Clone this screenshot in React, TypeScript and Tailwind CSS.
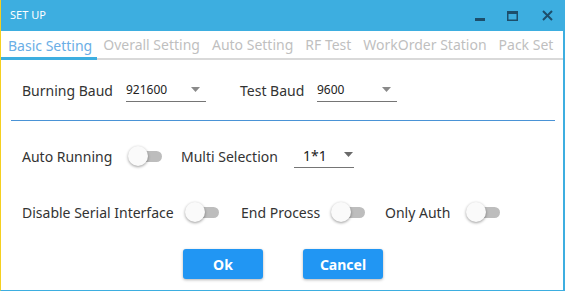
import React from "react";

const font = { fontFamily: '"Noto Sans", "Open Sans", sans-serif' };

function Select({ value, width }: { value: string; width: string }) {
  return (
    <div className={`relative flex items-center h-[24px] border-b border-[#757575] ${width}`}>
      <span className="text-[12px] text-[#222]">{value}</span>
      <svg className="absolute right-[6px] top-[9px]" width="9" height="5" viewBox="0 0 9 5">
        <path d="M0 0 L9 0 L4.5 5 Z" fill="#8a8a8a" />
      </svg>
    </div>
  );
}

function Toggle() {
  return (
    <div className="relative w-[34px] h-[20px] flex items-center">
      <div className="ml-[10px] w-[24px] h-[11px] rounded-full bg-[#bdbdbd]" />
      <div className="absolute left-0 top-0 w-[20px] h-[20px] rounded-full bg-[#fafafa] shadow-[0_1px_3px_rgba(0,0,0,0.4)]" />
    </div>
  );
}

export default function App() {
  return (
    <div className="w-[565px] h-[292px] bg-white text-[#333] overflow-hidden" style={font}>
      <div className="w-[565px] h-[291px] border-l border-l-[#f5d020] border-r-2 border-r-[#3daee0] border-b border-b-[#3daee0] flex flex-col">
        <div className="h-[31px] bg-[#3daee0] flex items-center pl-[9px] shrink-0">
          <span className="text-white text-[11px]">SET UP</span>
          <div className="ml-auto flex items-center h-full">
            <svg className="mr-[22px]" width="10" height="10" viewBox="0 0 10 10">
              <rect x="0" y="7" width="10" height="3" fill="#1d4e6b" />
            </svg>
            <svg className="mr-[24px]" width="11" height="10" viewBox="0 0 11 10">
              <rect x="0.75" y="0.75" width="9.5" height="8.5" fill="none" stroke="#1d4e6b" strokeWidth="1.5" />
              <rect x="0" y="0" width="11" height="3" fill="#1d4e6b" />
            </svg>
            <svg className="mr-[10px]" width="11" height="11" viewBox="0 0 11 11">
              <path d="M1 1 L10 10 M10 1 L1 10" stroke="#1d4e6b" strokeWidth="2" />
            </svg>
          </div>
        </div>
        <div className="h-[29px] flex items-end border-b-2 border-[#d9d9d9] shrink-0 whitespace-nowrap">
          <div className="pl-[7px] pr-[5px] h-full flex items-center text-[14px] text-[#6aaee6] border-b-[3px] border-[#3daee0] -mb-[2px]">Basic Setting</div>
          <div className="pl-[6px] pr-[6px] h-full flex items-center text-[14px] text-[#bfbfbf]">Overall Setting</div>
          <div className="px-[6px] h-full flex items-center text-[14px] text-[#bfbfbf]">Auto Setting</div>
          <div className="px-[6px] h-full flex items-center text-[14px] text-[#bfbfbf]">RF Test</div>
          <div className="px-[6px] h-full flex items-center text-[14px] text-[#bfbfbf]">WorkOrder Station</div>
          <div className="px-[6px] h-full flex items-center text-[14px] text-[#bfbfbf]">Pack Set</div>
        </div>
        <div className="flex flex-col pl-[21px] text-[14px]">
          <div className="flex items-center h-[24px] mt-[18px]">
            <span className="w-[104px]">Burning Baud</span>
            <Select value="921600" width="w-[80px]" />
            <span className="ml-[34px] w-[77px]">Test Baud</span>
            <Select value="9600" width="w-[80px]" />
          </div>
          <div className="h-[1px] bg-[#4a93d6] mt-[18px] mr-[8px] -ml-[11px]" />
          <div className="flex items-center h-[24px] mt-[23px]">
            <span className="w-[106px]">Auto Running</span>
            <Toggle />
            <span className="ml-[19px] w-[113px]">Multi Selection</span>
            <div className="relative flex items-center h-[24px] border-b border-[#757575] w-[60px]">
              <span className="text-[14px] text-[#222] pl-[9px]">1*1</span>
              <svg className="absolute right-[1px] top-[8px]" width="9" height="5" viewBox="0 0 9 5">
                <path d="M0 0 L9 0 L4.5 5 Z" fill="#6a6a6a" />
              </svg>
            </div>
          </div>
          <div className="flex items-center h-[24px] mt-[32px]">
            <span className="w-[163px]">Disable Serial Interface</span>
            <Toggle />
            <span className="ml-[22px] w-[90px]">End Process</span>
            <Toggle />
            <span className="ml-[20px] w-[81px]">Only Auth</span>
            <Toggle />
          </div>
          <div className="flex mt-[25px] pl-[161px] gap-[40px]">
            <button className="w-[80px] h-[30px] rounded-[3px] bg-[#2196f3] text-white font-bold text-[14px] shadow-[0_1px_3px_rgba(0,0,0,0.3)]">Ok</button>
            <button className="w-[80px] h-[30px] rounded-[3px] bg-[#2196f3] text-white font-bold text-[14px] shadow-[0_1px_3px_rgba(0,0,0,0.3)]">Cancel</button>
          </div>
        </div>
      </div>
    </div>
  );
}
